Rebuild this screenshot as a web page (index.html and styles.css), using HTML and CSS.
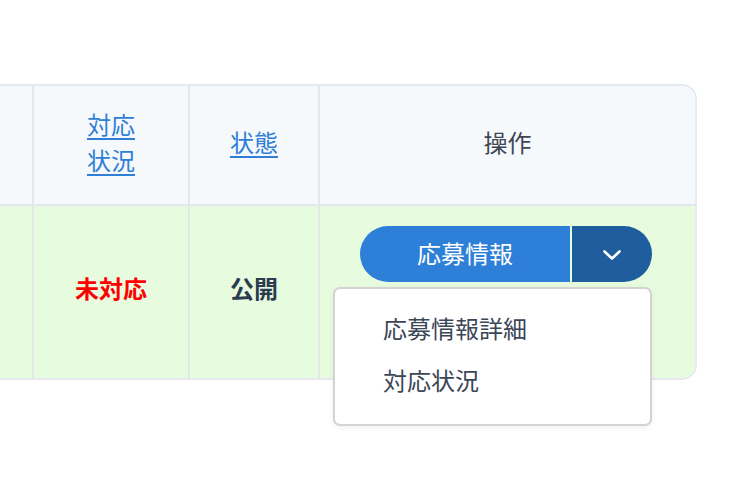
FILE: index.html
```html
<!DOCTYPE html>
<html lang="ja">
<head>
<meta charset="utf-8">
<link rel="stylesheet" href="styles.css">
</head>
<body>
<div class="page">
  <div class="table">
    <div class="cell head first"></div>
    <div class="cell head"><a class="sort" href="#">対応<br>状況</a></div>
    <div class="cell head"><a class="sort" href="#">状態</a></div>
    <div class="cell head op-head">操作</div>
    <div class="cell body first"></div>
    <div class="cell body"><span class="status-red">未対応</span></div>
    <div class="cell body"><span class="status-pub">公開</span></div>
    <div class="cell body op">
      <div class="split">
        <button class="btn-main">応募情報</button>
        <button class="btn-toggle" aria-label="menu">
          <svg width="22" height="14" viewBox="0 0 22 14"><path d="M3.5 3.5 L11 10.5 L18.5 3.5" fill="none" stroke="#fff" stroke-width="2.6" stroke-linecap="round" stroke-linejoin="round"/></svg>
        </button>
      </div>
      <ul class="menu">
        <li>応募情報詳細</li>
        <li>対応状況</li>
      </ul>
    </div>
  </div>
</div>
</body>
</html>
```
FILE: styles.css
```css
* { box-sizing: border-box; }
html, body { margin: 0; padding: 0; background: #fff; }
body {
  font-family: "Noto Sans CJK JP", "Noto Sans", sans-serif;
  font-size: 24px;
  overflow: hidden;
}
.page {
  padding-top: 84px;
  width: 732px;
  height: 496px;
}
.table {
  margin-left: -40px;
  width: 737px;
  border: 2px solid #e6e9ef;
  border-radius: 15px;
  display: grid;
  grid-template-columns: 70px 156px 130px 1fr;
  grid-template-rows: 120px 172px;
}
.cell {
  border-left: 2px solid #e3e7ee;
  display: flex;
  align-items: center;
  justify-content: center;
  text-align: center;
  line-height: 36px;
  padding-bottom: 6px;
}
.cell.first { border-left: none; }
.head {
  background: #f6f9fc;
  border-bottom: 2px solid #e3e7ee;
}
.op-head { border-top-right-radius: 13px; color: #3e4654; }
.body { background: #e7fbdf; padding-bottom: 8px; }
.body.op { border-bottom-right-radius: 13px; }
.sort {
  color: #2f7fd6;
  text-decoration: underline;
  text-underline-offset: 4px;
  text-decoration-thickness: 2px;
}
.status-red { color: #ff0000; font-weight: 700; }
.status-pub { color: #2c3b4d; font-weight: 700; }
.op {
  position: relative;
  align-items: flex-start;
  padding-top: 20px;
}
.split {
  display: flex;
  gap: 2px;
  margin-left: -3px;
}
.split button {
  border: none;
  height: 56px;
  font-family: inherit;
  font-size: 24px;
  color: #fff;
  padding: 0 0 3px 0;
  display: flex;
  align-items: center;
  justify-content: center;
}
.btn-main {
  width: 210px;
  background: #2e7fd7;
  border-radius: 28px 0 0 28px;
}
.btn-toggle {
  width: 80px;
  background: #1f5d9f;
  border-radius: 0 28px 28px 0;
}
.btn-toggle svg { margin-top: 5px; }
.menu {
  position: absolute;
  left: 13px;
  top: 81px;
  width: 319px;
  height: 139px;
  margin: 0;
  padding: 13px 0;
  list-style: none;
  background: #fff;
  border: 2px solid #d3d3d3;
  border-radius: 7px;
  box-shadow: 0 2px 6px rgba(0, 0, 0, 0.06);
  text-align: left;
  z-index: 2;
}
.menu li {
  height: 52px;
  line-height: 52px;
  padding-left: 48px;
  color: #3b4657;
  font-size: 24px;
}
```
